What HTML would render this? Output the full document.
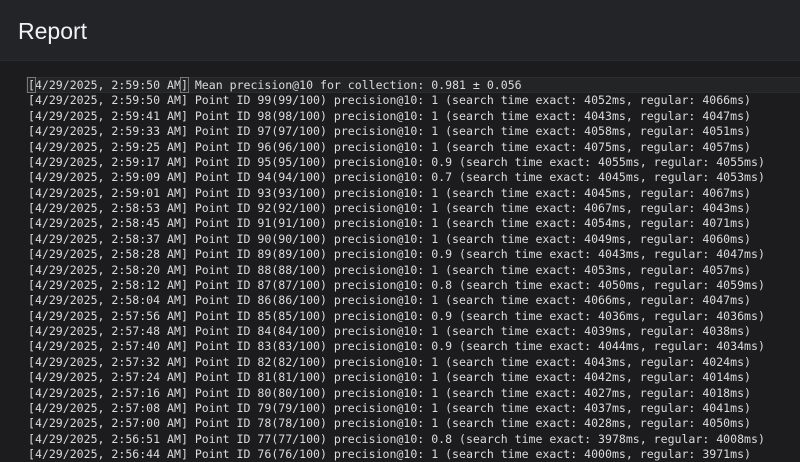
<!DOCTYPE html>
<html><head><style>
html,body{margin:0;padding:0;width:800px;height:460px;overflow:hidden;background:#1c1c1e;}
.h{height:61px;background:#222428;border-bottom:1px solid #2a2c30;box-sizing:border-box;}
.h span{position:absolute;left:18px;top:18px;font:23px "Liberation Sans",sans-serif;color:#f2f2f2;}
pre{position:absolute;left:28px;top:78px;margin:0;font:11.56px/15.375px "DejaVu Sans Mono","Liberation Mono",monospace;color:#dcdcdc;}
.hl{position:absolute;left:26px;top:77px;width:774px;height:16px;background:#232426;border-top:1px solid #2b2c2e;border-bottom:1px solid #2b2c2e;box-sizing:border-box;}
.b{outline:1px solid #777;}
</style></head><body>
<div class="h"><span>Report</span></div>
<div class="hl"></div>
<pre><span class="b">[</span>4/29/2025, 2:59:50 AM<span class="b">]</span> Mean precision@10 for collection: 0.981 ± 0.056
[4/29/2025, 2:59:50 AM] Point ID 99(99/100) precision@10: 1 (search time exact: 4052ms, regular: 4066ms)
[4/29/2025, 2:59:41 AM] Point ID 98(98/100) precision@10: 1 (search time exact: 4043ms, regular: 4047ms)
[4/29/2025, 2:59:33 AM] Point ID 97(97/100) precision@10: 1 (search time exact: 4058ms, regular: 4051ms)
[4/29/2025, 2:59:25 AM] Point ID 96(96/100) precision@10: 1 (search time exact: 4075ms, regular: 4057ms)
[4/29/2025, 2:59:17 AM] Point ID 95(95/100) precision@10: 0.9 (search time exact: 4055ms, regular: 4055ms)
[4/29/2025, 2:59:09 AM] Point ID 94(94/100) precision@10: 0.7 (search time exact: 4045ms, regular: 4053ms)
[4/29/2025, 2:59:01 AM] Point ID 93(93/100) precision@10: 1 (search time exact: 4045ms, regular: 4067ms)
[4/29/2025, 2:58:53 AM] Point ID 92(92/100) precision@10: 1 (search time exact: 4067ms, regular: 4043ms)
[4/29/2025, 2:58:45 AM] Point ID 91(91/100) precision@10: 1 (search time exact: 4054ms, regular: 4071ms)
[4/29/2025, 2:58:37 AM] Point ID 90(90/100) precision@10: 1 (search time exact: 4049ms, regular: 4060ms)
[4/29/2025, 2:58:28 AM] Point ID 89(89/100) precision@10: 0.9 (search time exact: 4043ms, regular: 4047ms)
[4/29/2025, 2:58:20 AM] Point ID 88(88/100) precision@10: 1 (search time exact: 4053ms, regular: 4057ms)
[4/29/2025, 2:58:12 AM] Point ID 87(87/100) precision@10: 0.8 (search time exact: 4050ms, regular: 4059ms)
[4/29/2025, 2:58:04 AM] Point ID 86(86/100) precision@10: 1 (search time exact: 4066ms, regular: 4047ms)
[4/29/2025, 2:57:56 AM] Point ID 85(85/100) precision@10: 0.9 (search time exact: 4036ms, regular: 4036ms)
[4/29/2025, 2:57:48 AM] Point ID 84(84/100) precision@10: 1 (search time exact: 4039ms, regular: 4038ms)
[4/29/2025, 2:57:40 AM] Point ID 83(83/100) precision@10: 0.9 (search time exact: 4044ms, regular: 4034ms)
[4/29/2025, 2:57:32 AM] Point ID 82(82/100) precision@10: 1 (search time exact: 4043ms, regular: 4024ms)
[4/29/2025, 2:57:24 AM] Point ID 81(81/100) precision@10: 1 (search time exact: 4042ms, regular: 4014ms)
[4/29/2025, 2:57:16 AM] Point ID 80(80/100) precision@10: 1 (search time exact: 4027ms, regular: 4018ms)
[4/29/2025, 2:57:08 AM] Point ID 79(79/100) precision@10: 1 (search time exact: 4037ms, regular: 4041ms)
[4/29/2025, 2:57:00 AM] Point ID 78(78/100) precision@10: 1 (search time exact: 4028ms, regular: 4050ms)
[4/29/2025, 2:56:51 AM] Point ID 77(77/100) precision@10: 0.8 (search time exact: 3978ms, regular: 4008ms)
[4/29/2025, 2:56:44 AM] Point ID 76(76/100) precision@10: 1 (search time exact: 4000ms, regular: 3971ms)
</pre>
</body></html>
